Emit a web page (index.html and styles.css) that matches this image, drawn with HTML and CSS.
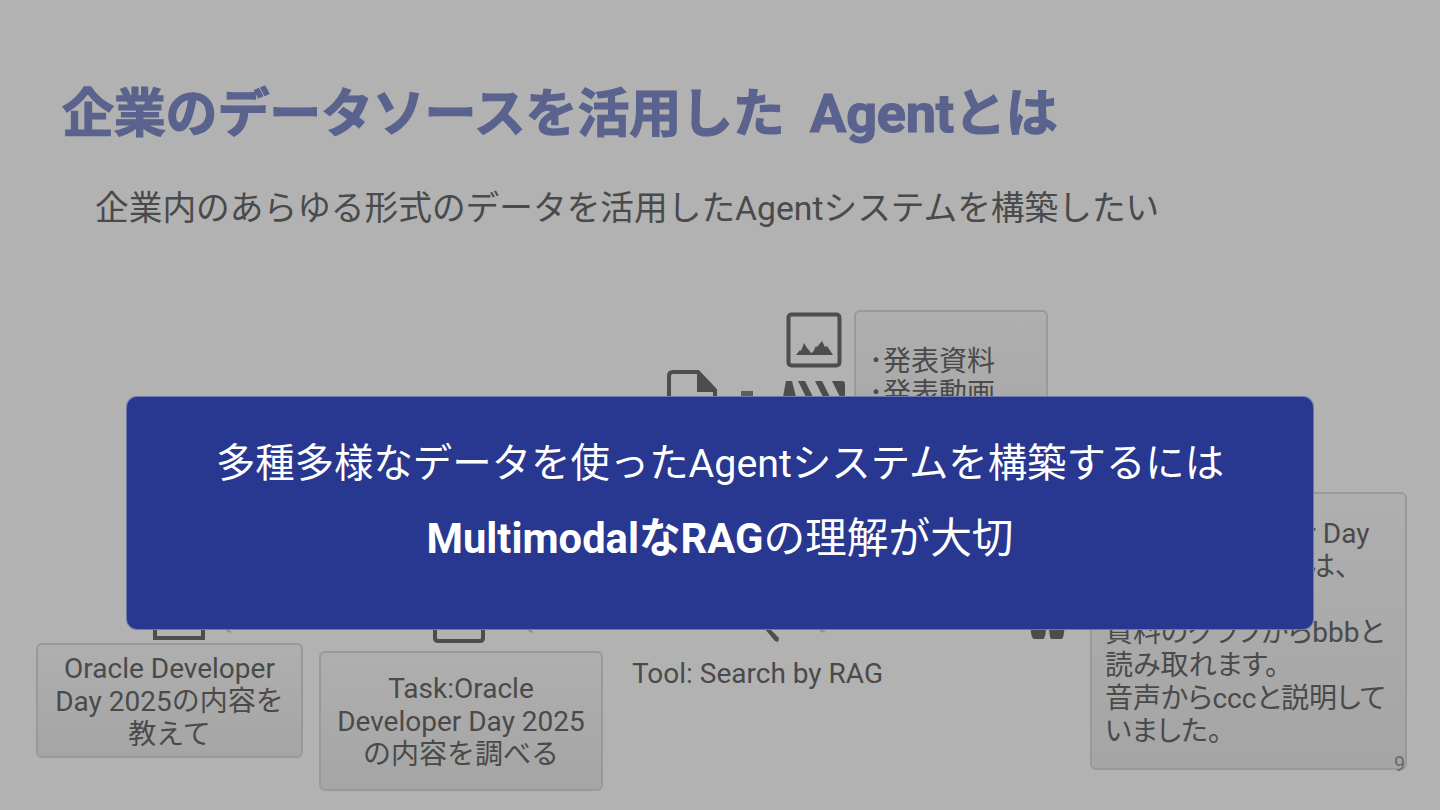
FILE: index.html
```html
<!DOCTYPE html>
<html lang="ja">
<head>
<meta charset="utf-8">
<title>企業のデータソースを活用した Agentとは</title>
<link rel="stylesheet" href="styles.css">
</head>
<body>
<main class="slide">
  <h1 class="title">企業のデータソースを活用した&nbsp; <span class="title-latin">Agent</span>とは</h1>
  <p class="subtitle">企業内のあらゆる形式のデータを活用したAgentシステムを構築したい</p>

  <svg class="icon icon-image" viewBox="0 0 56 56"><rect x="2.500" y="2.500" width="51" height="51" rx="3" fill="none" stroke="#4d4d4d" stroke-width="4"/><path d="M10 43 L14 38 L15 39 L18 31 L21 36 L23 38 L25 41 L27 40 L30 34 L31 35 L36 29 L39 35 L41 34 L47 43 Z" fill="#4d4d4d"/></svg>
  <svg class="icon icon-doc" viewBox="0 0 50 70"><path d="M2 68 V6 Q2 2 6 2 H31 L48 20 V68" fill="none" stroke="#4d4d4d" stroke-width="4"/><path d="M30 2 L48 20 V22 H30 Z" fill="#4d4d4d"/></svg>
  <div class="dash"></div>
  <svg class="icon icon-clap" viewBox="0 0 62 30"><path d="M0 17 L3 1 H9 L13 17 Z M15 1 H22 L30 17 H23 Z M32 1 H39 L47 17 H40 Z M49 1 H59 Q62 1 62 4 V17 H57 Z" fill="#4d4d4d"/></svg>

  <div class="card card-media"><p>･発表資料<br>･発表動画</p></div>

  <svg class="icon icon-user" viewBox="0 0 52 14"><path d="M2 0 V12 H50 V0" fill="none" stroke="#4d4d4d" stroke-width="4"/></svg>
  <svg class="icon icon-task" viewBox="0 0 52 14"><path d="M2 0 V9 Q2 12 5 12 H47 Q50 12 50 9 V0" fill="none" stroke="#4d4d4d" stroke-width="4"/></svg>
  <svg class="icon icon-tool" viewBox="0 0 18 18"><path d="M0 4 L4 3 L15 14 L14 18 L11 17 Z" fill="#4d4d4d"/></svg>
  <svg class="icon icon-cups" viewBox="0 0 38 12"><path d="M0 0 H17 L16 7 Q15 11 13 11 H5 Q2 11 1 7 Z M20 0 H37 L36 7 Q35 11 33 11 H24 Q21 11 21 7 Z" fill="#4d4d4d"/></svg>
  <span class="tick tick-user"></span>
  <span class="tick tick-task"></span>
  <span class="tick tick-tool"></span>

  <div class="card card-question"><p>Oracle Developer Day 2025の内容を教えて</p></div>
  <div class="card card-task"><p>Task:Oracle Developer Day 2025の内容を調べる</p></div>
  <p class="tool-label">Tool: Search by RAG</p>
  <div class="card card-answer"><p>Oracle Developer Day<br>2025の発表内容は、<br>aaaです。<br>資料のグラフからbbbと<br>読み取れます。<br>音声からcccと説明して<br>いました。</p></div>
  <span class="page-number">9</span>

  <section class="callout">
    <p class="callout-first">多種多様なデータを使ったAgentシステムを構築するには</p>
    <p class="callout-second"><strong>MultimodalなRAG</strong>の理解が大切</p>
  </section>
</main>
</body>
</html>
```
FILE: styles.css
```css
* { box-sizing: border-box; margin: 0; padding: 0; }
html, body { width: 1440px; height: 810px; overflow: hidden; }
body { background: #b2b2b2; font-family: Roboto, "Noto Sans CJK JP", sans-serif; color: #4a4a4a; }
.slide { position: relative; width: 1440px; height: 810px; overflow: hidden; background: #b2b2b2; }
.title { position: absolute; left: 62px; top: 79px; font-size: 52px; line-height: 70px; font-weight: 700; letter-spacing: -0.2px; color: #5a628e; white-space: nowrap; -webkit-text-stroke: 1.2px #5a628e; }
.title-latin { font-size: 54px; }
.subtitle { position: absolute; left: 95px; top: 186px; font-size: 33.700px; line-height: 46px; white-space: nowrap; }
.icon { position: absolute; display: block; }
.icon-image { left: 786px; top: 312px; width: 56px; height: 56px; }
.icon-doc { left: 667px; top: 370px; width: 50px; height: 70px; }
.dash { position: absolute; left: 741px; top: 391px; width: 12px; height: 20px; background: #5e5e5e; }
.icon-clap { left: 783px; top: 380px; width: 62px; height: 30px; }
.icon-user { left: 153px; top: 626px; width: 52px; height: 14px; }
.icon-task { left: 433px; top: 629px; width: 52px; height: 14px; }
.icon-tool { left: 764px; top: 624px; width: 18px; height: 18px; }
.icon-cups { left: 1029px; top: 629px; width: 38px; height: 11px; }
.tick { position: absolute; width: 5px; height: 2px; background: #8e8e8e; transform: rotate(25deg); }
.tick-user { left: 226px; top: 630px; }
.tick-task { left: 528px; top: 630px; }
.tick-tool { left: 820px; top: 630px; }
.card { position: absolute; display: flex; align-items: center; border: 2px solid #999; border-radius: 6px; background: linear-gradient(#afafaf, #a5a5a5); font-size: 28px; line-height: 33px; }
.card-media { left: 854px; top: 310px; width: 194px; height: 170px; padding: 34px 13px 0; line-height: 32px; align-items: flex-start; }
.card-question { left: 36px; top: 643px; width: 267px; height: 115px; padding: 2px 14px 0; text-align: center; }
.card-task { left: 319px; top: 651px; width: 284px; height: 140px; padding: 0 14px; text-align: center; }
.card-answer { left: 1090px; top: 492px; width: 317px; height: 278px; padding: 2px 13px 0; white-space: nowrap; font-feature-settings: "palt"; }
.tool-label { position: absolute; left: 632px; top: 657px; font-size: 28px; line-height: 34px; white-space: nowrap; }
.page-number { position: absolute; left: 1394px; top: 752px; font-size: 20px; line-height: 24px; color: #6a6a6a; }
.callout { position: absolute; left: 127px; top: 397px; width: 1186px; height: 232px; padding-top: 29px; border-radius: 10px; background: #28378f; box-shadow: 0 0 0 1px #6f7aa8; color: #fff; line-height: 75px; text-align: center; }
.callout-first { font-size: 39.400px; }
.callout-second { font-size: 41.700px; }
.callout strong { font-weight: 700; }
```
